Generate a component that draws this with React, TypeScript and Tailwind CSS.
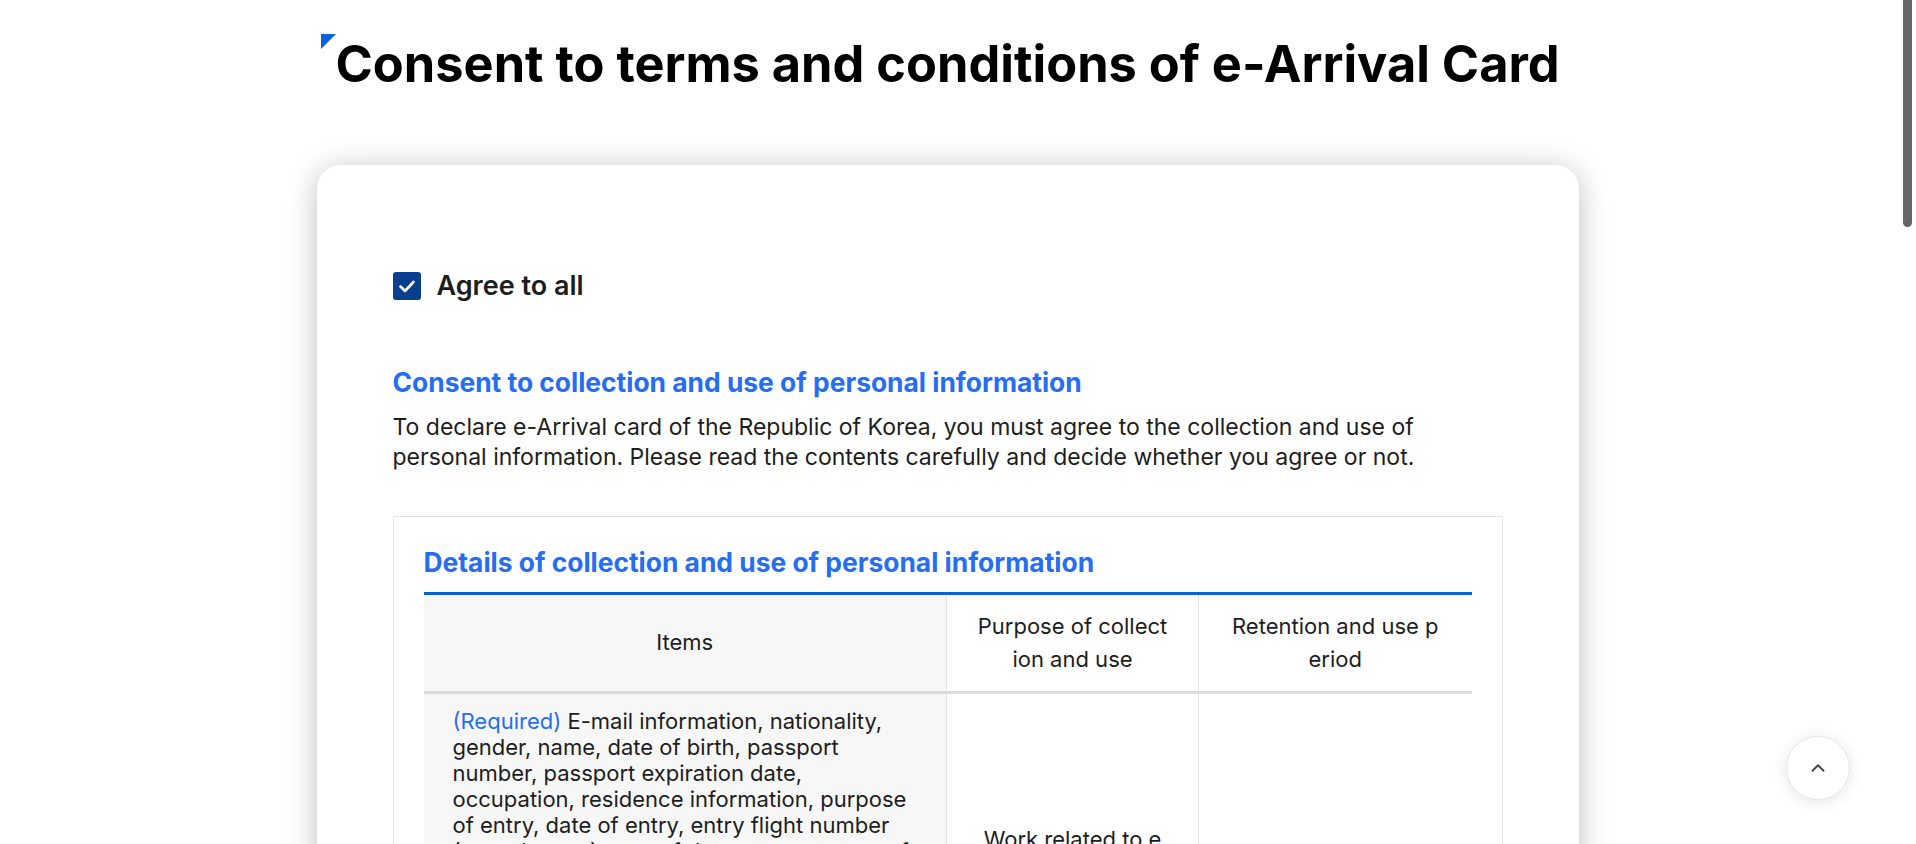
import { ChevronUp } from "lucide-react";

const itemsText =
  "E-mail information, nationality, gender, name, date of birth, passport number, passport expiration date, occupation, residence information, purpose of entry, date of entry, entry flight number (vessel name), port of departure, country of departure, address in Korea (place of stay), contact number in Korea, travel companion information, health condition information, countries visited within the last 21 days, customs declaration information, quarantine declaration information";

function Checkbox({ checked = true }: { checked?: boolean }) {
  return (
    <span
      className={`flex size-[28px] shrink-0 items-center justify-center rounded-[3px] ${
        checked ? "bg-[#093f8e]" : "border border-[#b0b0b0] bg-white"
      }`}
    >
      {checked && (
        <svg viewBox="0 0 24 24" className="size-[24px]" fill="none" stroke="white" strokeWidth="2.6" strokeLinecap="round" strokeLinejoin="round">
          <path d="M5.5 12.5l4.5 4.5L18.5 8" />
        </svg>
      )}
    </span>
  );
}

function Radio({ label, checked }: { label: string; checked?: boolean }) {
  return (
    <label className="flex items-center gap-3 text-[22px] text-[#1d1d1d]">
      <span className={`flex size-[24px] items-center justify-center rounded-full border-2 ${checked ? "border-[#093f8e]" : "border-[#b0b0b0]"}`}>
        {checked && <span className="size-[12px] rounded-full bg-[#093f8e]" />}
      </span>
      {label}
    </label>
  );
}

function ConsentTable({ purpose, retention, items }: { purpose: string; retention: string; items: string }) {
  return (
    <table className="w-full table-fixed border-collapse text-[22px] text-[#1d1d1d]">
      <colgroup>
        <col className="w-[523px]" />
        <col className="w-[252px]" />
        <col />
      </colgroup>
      <thead>
        <tr className="border-t-[3px] border-b-[3px] border-t-[#0b62d6] border-b-[#dcdcdc]">
          <th className="bg-[#f7f7f7] px-[30px] py-[15px] font-normal leading-[33px]">Items</th>
          <th className="border-l border-[#e2e2e2] px-[30px] py-[15px] font-normal leading-[33px] break-all">
            Purpose of collection and use
          </th>
          <th className="border-l border-[#e2e2e2] px-[30px] py-[15px] font-normal leading-[33px] break-all">
            Retention and use period
          </th>
        </tr>
      </thead>
      <tbody>
        <tr className="border-b border-[#e2e2e2]">
          <td className="bg-[#f7f7f7] px-[29px] pt-[14px] pb-[16px] align-middle leading-[26px]">
            <span className="text-[#256ef4]">(Required)</span> {items}
          </td>
          <td className="border-l border-[#e2e2e2] px-[33px] py-[14px] text-center align-middle leading-[26px] break-all">{purpose}</td>
          <td className="border-l border-[#e2e2e2] px-[40px] py-[14px] text-center align-middle leading-[26px] break-all">{retention}</td>
        </tr>
      </tbody>
    </table>
  );
}

function ConsentSection({
  title,
  desc,
  tableTitle,
  items,
  purpose,
  retention,
}: {
  title: string;
  desc: string;
  tableTitle: string;
  items: string;
  purpose: string;
  retention: string;
}) {
  return (
    <section className="flex flex-col">
      <h3 className="text-[26.4px] font-bold leading-[36px] text-[#256ef4]">{title}</h3>
      <p className="mt-3 text-[23px] leading-[30px] text-[#1d1d1d]">{desc}</p>
      <div className="mt-[44px] border border-[#e2e2e2] px-[30px] pt-[27px] pb-[30px]">
        <h4 className="mb-[12px] text-[26.4px] font-bold leading-[36px] text-[#256ef4]">{tableTitle}</h4>
        <ConsentTable items={items} purpose={purpose} retention={retention} />
        <p className="mt-6 text-[20px] leading-[30px] text-[#555]">
          ※ You have the right to refuse consent to the collection and use of personal information. However, if you refuse, you cannot declare the e-Arrival card.
        </p>
      </div>
      <div className="mt-8 flex items-center justify-between rounded-lg bg-[#f4f7fc] px-8 py-6">
        <span className="text-[22px] font-semibold text-[#1d1d1d]">Do you agree to the above?</span>
        <div className="flex items-center gap-10">
          <Radio label="Agree" checked />
          <Radio label="Disagree" />
        </div>
      </div>
    </section>
  );
}

export default function App() {
  return (
    <div className="min-h-screen bg-white pr-[21px] font-['Inter','Noto_Sans',sans-serif] antialiased">
      <div className="mx-auto w-[1262px] pt-[34px] pb-[160px]">
        <h2 className="relative pl-[19px] text-[50.5px] font-bold leading-[60px] text-black">
          <span className="absolute top-0 left-[4px] size-0 border-t-[15px] border-r-[15px] border-t-[#0b62d6] border-r-transparent" />
          Consent to terms and conditions of e-Arrival Card
        </h2>

        <div className="mt-[71px] rounded-3xl bg-white px-[76px] pt-[101px] pb-[90px] shadow-[0_4px_30px_rgba(0,0,0,0.25)]">
          <label className="flex items-center gap-[16px]">
            <Checkbox />
            <span className="text-[27px] font-semibold text-[#1d1d1d]">Agree to all</span>
          </label>

          <div className="mt-[57px] flex flex-col gap-[90px]">
            <ConsentSection
              title="Consent to collection and use of personal information"
              desc="To declare e-Arrival card of the Republic of Korea, you must agree to the collection and use of personal information. Please read the contents carefully and decide whether you agree or not."
              tableTitle="Details of collection and use of personal information"
              items={itemsText}
              purpose="Work related to e-Arrival card declaration"
              retention="Once the purpose is achieved"
            />
            <ConsentSection
              title="Consent to provision of personal information to third parties"
              desc="Personal information entered in the e-Arrival card may be provided to related agencies for immigration control and quarantine. Please read the contents carefully and decide whether you agree or not."
              tableTitle="Details of provision of personal information"
              items="E-mail information, nationality, gender, name, date of birth, passport number, date of entry, entry flight number (vessel name), address in Korea (place of stay)"
              purpose="Immigration control and quarantine"
              retention="Once the purpose is achieved"
            />
          </div>

          <div className="mt-[80px] flex justify-center gap-4">
            <button type="button" className="h-[64px] w-[220px] rounded-lg border border-[#093f8e] bg-white text-[22px] font-semibold text-[#093f8e]">
              Cancel
            </button>
            <button type="button" className="h-[64px] w-[220px] rounded-lg bg-[#093f8e] text-[22px] font-semibold text-white">
              Next
            </button>
          </div>
        </div>
      </div>

      {/* page scrollbar thumb */}
      <div className="fixed top-[-6px] right-[4px] h-[233px] w-[9px] rounded-full bg-[#666]" />

      <button
        type="button"
        className="fixed right-[66px] bottom-[44px] flex size-[64px] items-center justify-center rounded-full border border-[#e6e6e6] bg-white text-[#444] shadow-[0_2px_16px_rgba(0,0,0,0.1)]"
      >
        <ChevronUp className="size-[22px]" strokeWidth={2} />
      </button>
    </div>
  );
}
